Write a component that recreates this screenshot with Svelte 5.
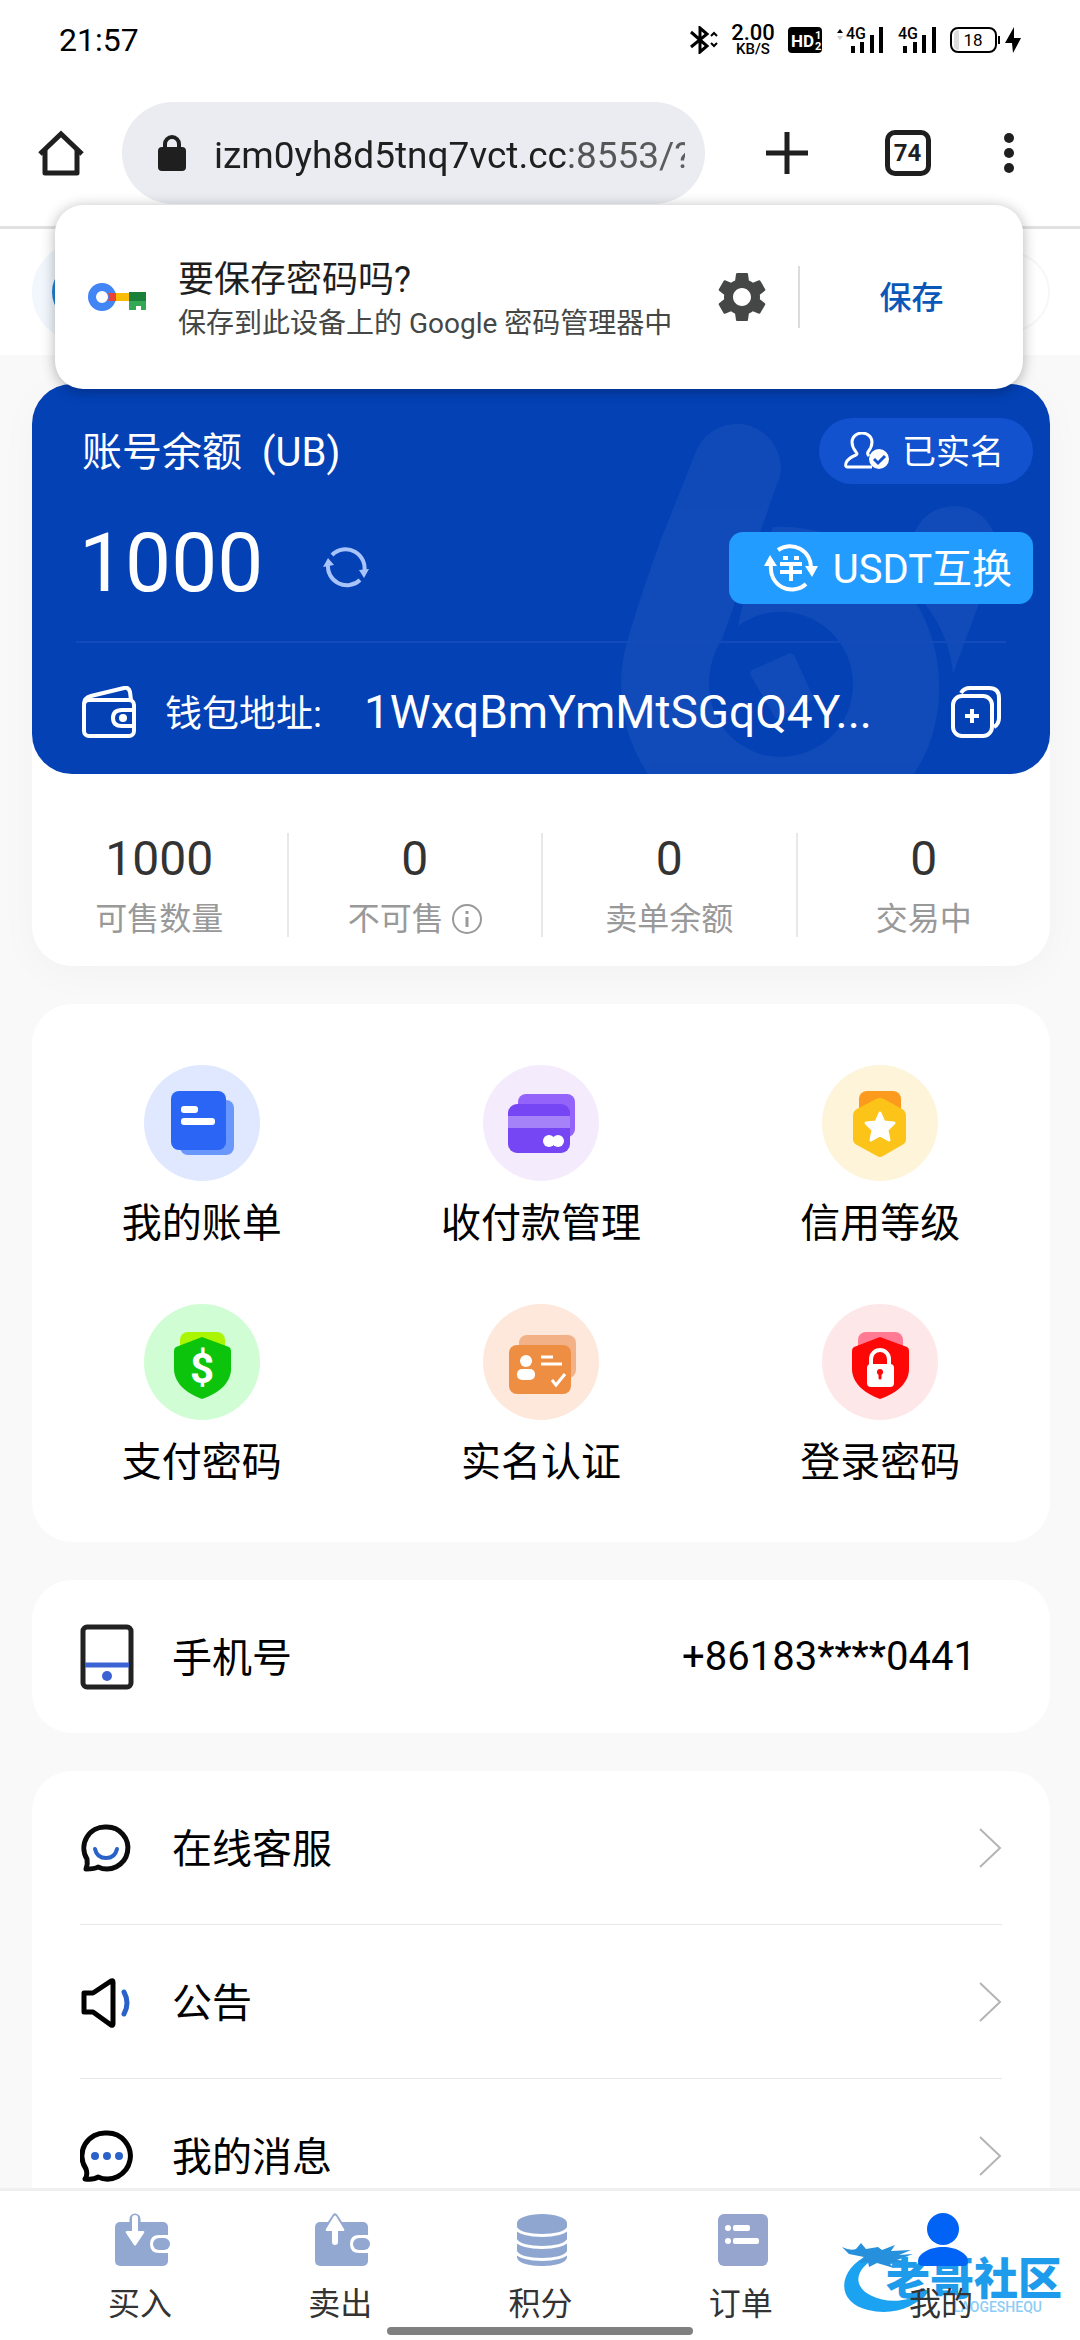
<script lang="ts">
  let url = $state("izm0yh8d5tnq7vct.cc:8553/?");
  let activeTab = $state("mine");

  const stats = [
    { value: "1000", label: "可售数量", info: false },
    { value: "0", label: "不可售", info: true },
    { value: "0", label: "卖单余额", info: false },
    { value: "0", label: "交易中", info: false },
  ];

  const shortcuts = [
    { id: "bill", label: "我的账单" },
    { id: "payment", label: "收付款管理" },
    { id: "credit", label: "信用等级" },
    { id: "paypass", label: "支付密码" },
    { id: "verify", label: "实名认证" },
    { id: "loginpass", label: "登录密码" },
  ];

  const links = [
    { id: "service", label: "在线客服" },
    { id: "notice", label: "公告" },
    { id: "message", label: "我的消息" },
  ];

  const tabs = [
    { id: "buy", label: "买入" },
    { id: "sell", label: "卖出" },
    { id: "points", label: "积分" },
    { id: "orders", label: "订单" },
    { id: "mine", label: "我的" },
  ];
</script>

{#snippet shortcutIcon(id: string)}
  <svg width="116" height="116" viewBox="0 0 116 116" aria-hidden="true">
    {#if id === "bill"}
      <circle cx="58" cy="58" r="58" fill="#dfe8fe" />
      <rect x="36" y="35" width="54" height="55" rx="8" fill="#6a97fb" />
      <rect x="27" y="26" width="55" height="59" rx="8" fill="#2a65f6" />
      <rect x="37" y="41" width="17" height="7" rx="3" fill="#fff" />
      <rect x="37" y="53" width="34" height="7" rx="3" fill="#fff" />
    {:else if id === "payment"}
      <circle cx="58" cy="58" r="58" fill="#f4ecfc" />
      <rect x="35" y="29" width="57" height="43" rx="8" fill="#9463f9" />
      <rect x="25" y="39" width="62" height="49" rx="9" fill="#7646f5" />
      <path d="M25 51h62v12H25z" fill="#a582f8" />
      <circle cx="66" cy="76" r="6" fill="#fff" />
      <circle cx="75" cy="76" r="6" fill="#fff" />
    {:else if id === "credit"}
      <circle cx="58" cy="58" r="58" fill="#fdf4d9" />
      <rect x="37" y="26" width="42" height="34" rx="8" fill="#fc9a1d" />
      <path d="M54 34q4-2 8 0l18 10q4 2 4 7v23q0 4-4 6L61 91q-3 2-6 0L35 80q-4-2-4-6V51q0-5 4-7z" fill="#fcc318" />
      <path d="M58 48l4 9 10 1-7 7 2 10-9-5-9 5 2-10-7-7 10-1z" fill="#fff" stroke="#fff" stroke-width="3" stroke-linejoin="round" />
    {:else if id === "paypass"}
      <circle cx="58" cy="58" r="58" fill="#d0fdd3" />
      <rect x="36" y="28" width="45" height="30" rx="8" fill="#a9f504" />
      <path d="M58 33l27 10q2 1 2 4v18c0 13-11 24-29 30C41 89 30 78 30 65V47q0-3 2-4z" fill="#0cc40c" />
      <text x="58" y="79" text-anchor="middle" font-family="Roboto, sans-serif" font-size="42" font-weight="700" fill="#fff">$</text>
    {:else if id === "verify"}
      <circle cx="58" cy="58" r="58" fill="#fde8db" />
      <rect x="36" y="31" width="57" height="43" rx="8" fill="#f3b188" />
      <rect x="26" y="41" width="62" height="49" rx="8" fill="#ed8e43" />
      <circle cx="43" cy="57" r="6" fill="#fff" />
      <rect x="34" y="65" width="18" height="11" rx="5" fill="#fff" />
      <path d="M58 53h12M58 60h21" stroke="#fff" stroke-width="3" />
      <path d="M69 76l4 5 9-11" fill="none" stroke="#fff" stroke-width="3" />
    {:else}
      <circle cx="58" cy="58" r="58" fill="#fde7e9" />
      <rect x="36" y="28" width="45" height="30" rx="8" fill="#ff7a92" />
      <path d="M58 33l27 10q2 1 2 4v18c0 13-11 24-29 30C41 89 30 78 30 65V47q0-3 2-4z" fill="#fd0707" />
      <path d="M49 62v-7a9 9 0 0 1 18 0v7" fill="none" stroke="#fff" stroke-width="4" />
      <rect x="45" y="60" width="27" height="23" rx="4" fill="#fff" />
      <path d="M58 74v-5" stroke="#fd0707" stroke-width="3" stroke-linecap="round" />
      <circle cx="58" cy="68" r="3" fill="#fd0707" />
    {/if}
  </svg>
{/snippet}

{#snippet rowIcon(id: string)}
  <svg width="54" height="66" viewBox="0 0 54 66" fill="none" aria-hidden="true">
    {#if id === "phone"}
      <rect x="3" y="3" width="48" height="60" rx="4" stroke="#222" stroke-width="5" />
      <path d="M5 41h44" stroke="#3c63d3" stroke-width="5" />
      <circle cx="27" cy="52" r="5" fill="#3c63d3" />
    {:else if id === "service"}
      <path d="M26 12a21 21 0 1 1-8 40q-3 2-12 2 2-5 1-10A21 21 0 0 1 26 12z" stroke="#0b0b0b" stroke-width="5" stroke-linejoin="round" />
      <path d="M15 34q2 9 11 9t11-9" stroke="#2b62c9" stroke-width="4" stroke-linecap="round" />
    {:else if id === "notice"}
      <path d="M4 24h9l18-12q2-1 2 1v42q0 2-2 1L13 43H4z" stroke="#000" stroke-width="5" stroke-linejoin="round" />
      <path d="M44 23q6 11 0 22" stroke="#2b62c9" stroke-width="5" stroke-linecap="round" />
    {:else}
      <path d="M27 10a23 23 0 1 1-9 44q-4 3-13 2 3-4 1-10A23 23 0 0 1 27 10z" stroke="#000" stroke-width="5" stroke-linejoin="round" />
      <circle cx="15" cy="33" r="4" fill="#2b62c9" />
      <circle cx="27" cy="33" r="4" fill="#2b62c9" />
      <circle cx="39" cy="33" r="4" fill="#2b62c9" />
    {/if}
  </svg>
{/snippet}

{#snippet tabIcon(id: string)}
  <svg width="60" height="54" viewBox="0 0 60 54" aria-hidden="true">
    {#if id === "buy" || id === "sell"}
      <rect x="5" y="9" width="53" height="44" rx="5" fill="#93a8d1" />
      {#if id === "buy"}
        <path d="M25 6v19" stroke="#93a8d1" stroke-width="11" stroke-linecap="round" />
        <path d="M25 5v16" stroke="#fff" stroke-width="6" stroke-linecap="round" />
        <path d="M17 18h16q2 0 1 2l-8 12q-1 1-2 0l-8-12q-1-2 1-2z" fill="#fff" />
      {:else}
        <path d="M25 3l8 12H17z" fill="#fff" stroke="#93a8d1" stroke-width="5" stroke-linejoin="round" />
        <path d="M25 14v15" stroke="#fff" stroke-width="6" stroke-linecap="round" />
        <path d="M24 3q1-1 2 0l8 13q1 2-1 2H17q-2 0-1-2z" fill="#fff" />
      {/if}
      <path d="M60 22H49q-9 0-9 9t9 9h11z" fill="#fff" />
      <rect x="43" y="25" width="17" height="12" rx="6" fill="#93a8d1" />
    {:else if id === "points"}
      <path d="M7 10v34c0 12 50 12 50 0V10z" fill="#8fa7d0" />
      <ellipse cx="32" cy="10" rx="25" ry="9" fill="#8fa7d0" />
      <path d="M6 15c4 10 48 10 52 0M6 27c4 10 48 10 52 0M6 39c4 10 48 10 52 0" fill="none" stroke="#fff" stroke-width="3" />
    {:else if id === "orders"}
      <rect x="7" y="1" width="50" height="52" rx="6" fill="#95a5cd" />
      <circle cx="17" cy="15" r="3" fill="#fff" />
      <circle cx="17" cy="28" r="3" fill="#fff" />
      <rect x="22" y="12" width="17" height="6" rx="2" fill="#fff" />
      <rect x="22" y="25" width="26" height="6" rx="2" fill="#fff" />
    {:else}
      <circle cx="32" cy="16" r="16" fill="#0063f5" />
      <path d="M32 34c14 0 25 7 25 14q0 5-5 5H12q-5 0-5-5c0-7 11-14 25-14z" fill="#0063f5" />
    {/if}
  </svg>
{/snippet}

<div class="screen">
  <div class="status-bar">
    <span class="clock">21:57</span>
    <div class="status-icons">
      <svg width="28" height="28" viewBox="0 0 28 28" fill="none" stroke="#000" stroke-width="3" aria-hidden="true">
        <path d="M1 6l16 14-7 6V2l7 6L1 21" />
        <path d="M21 10l3-3 3 3M21 17l3 3 3-3" stroke-width="2" />
      </svg>
      <span class="net-speed"><b>2.00</b><small>KB/S</small></span>
      <svg width="34" height="26" viewBox="0 0 34 26" aria-hidden="true">
        <rect width="34" height="26" rx="4" />
        <text x="3" y="20" class="svg-text" font-size="17" font-weight="700" fill="#fff">HD</text>
        <text x="27" y="12" class="svg-text" font-size="11" font-weight="700" fill="#fff">1</text>
        <text x="27" y="23" class="svg-text" font-size="11" font-weight="700" fill="#fff">2</text>
      </svg>
      <svg width="48" height="34" viewBox="0 -4 48 34" aria-hidden="true">
        <path d="M1 6l3-4 3 4z" />
        <path d="M1 9l3 4 3-4z" fill="#ccc" />
        <text x="10" y="12" class="svg-text" font-size="16" font-weight="500">4G</text>
        <path d="M15 19h4v7h-4zM24 15h4v11h-4zM34 8h4v18h-4zM43 0h4v26h-4z" />
      </svg>
      <svg width="38" height="34" viewBox="0 -4 38 34" aria-hidden="true">
        <text x="0" y="12" class="svg-text" font-size="16" font-weight="500">4G</text>
        <path d="M5 19h4v7H5zM15 15h4v11h-4zM24 8h4v18h-4zM34 0h4v26h-4z" />
      </svg>
      <svg width="71" height="26" viewBox="0 0 71 26" aria-hidden="true">
        <rect x="1" y="1" width="45" height="24" rx="7" fill="#fff" stroke="#000" stroke-width="2" />
        <path d="M4 6q1-3 5-3v20q-4 0-5-3z" fill="#ddd" />
        <path d="M48 9h2v8h-2z" />
        <path d="M64 0L55 16h7l1 10 8-15h-7z" />
        <text x="23" y="19" text-anchor="middle" class="svg-text" font-size="17">18</text>
      </svg>
    </div>
  </div>

  <div class="toolbar">
    <button class="icon-btn" aria-label="主页">
      <svg width="46" height="46" viewBox="0 0 46 46" fill="none" stroke="#1f1f1f" stroke-width="5">
        <path d="M2 24L23 4l21 20" />
        <path d="M7 20v23h32V20" stroke-linejoin="round" />
      </svg>
    </button>
    <div class="address">
      <svg width="28" height="36" viewBox="0 0 28 36" aria-hidden="true">
        <path d="M7 14V9a7 7 0 0 1 14 0v5" fill="none" stroke="#1f1f1f" stroke-width="4" />
        <rect y="12" width="28" height="24" rx="4" fill="#1f1f1f" />
      </svg>
      <input type="text" aria-label="网址" bind:value={url} />
    </div>
    <button class="icon-btn wide" aria-label="新标签页">
      <svg width="42" height="42" viewBox="0 0 42 42" stroke="#1f1f1f" stroke-width="5">
        <path d="M21 0v42M0 21h42" />
      </svg>
    </button>
    <button class="icon-btn wide" aria-label="标签页"><span class="tab-count">74</span></button>
    <button class="icon-btn more" aria-label="更多">
      <svg width="12" height="42" viewBox="0 0 12 42" fill="#1f1f1f">
        <circle cx="6" cy="6" r="5" />
        <circle cx="6" cy="21" r="5" />
        <circle cx="6" cy="36" r="5" />
      </svg>
    </button>
  </div>

  <div class="save-prompt" role="dialog" aria-label="保存密码">
    <svg width="58" height="32" viewBox="0 0 58 32" aria-hidden="true">
      <path d="M22 12h20v8H22z" fill="#fbbc05" />
      <path d="M41 11h17v10H41z" fill="#188038" />
      <path d="M41 20h17v9h-5v-4h-5v4h-7z" fill="#34a853" />
      <circle cx="14" cy="16" r="10" fill="none" stroke="#4285f4" stroke-width="8" />
      <path d="M20 12h8v8h-8q2-4 0-8z" fill="#ea4335" />
    </svg>
    <div class="prompt-text">
      <strong>要保存密码吗?</strong>
      <span>保存到此设备上的 Google 密码管理器中</span>
    </div>
    <button class="gear" aria-label="设置">
      <svg width="60" height="60" viewBox="0 0 24 24" fill="#444746">
        <path d="M19.14 12.94c.04-.3.06-.61.06-.94 0-.32-.02-.64-.07-.94l2.03-1.58c.18-.14.23-.41.12-.61l-1.92-3.32c-.12-.22-.37-.29-.59-.22l-2.39.96c-.5-.38-1.03-.7-1.62-.94l-.36-2.54c-.04-.24-.24-.41-.48-.41h-3.84c-.24 0-.43.17-.47.41l-.36 2.54c-.59.24-1.13.57-1.62.94l-2.39-.96c-.22-.08-.47 0-.59.22L2.74 8.87c-.12.21-.08.47.12.61l2.03 1.58c-.05.3-.09.63-.09.94s.02.64.07.94l-2.03 1.58c-.18.14-.23.41-.12.61l1.92 3.32c.12.22.37.29.59.22l2.39-.96c.5.38 1.03.7 1.62.94l.36 2.54c.05.24.24.41.48.41h3.84c.24 0 .44-.17.47-.41l.36-2.54c.59-.24 1.13-.56 1.62-.94l2.39.96c.22.08.47 0 .59-.22l1.92-3.32c.12-.22.07-.47-.12-.61l-2.01-1.58zM12 15.6c-1.98 0-3.6-1.62-3.6-3.6s1.62-3.6 3.6-3.6 3.6 1.62 3.6 3.6-1.62 3.6-3.6 3.6z" />
      </svg>
    </button>
    <button class="save">保存</button>
  </div>

  <main>
    <header class="profile">
      <span class="avatar"></span>
      <span class="profile-pill"></span>
    </header>

    <section class="balance">
      <div class="balance-card">
        <svg class="emblem" width="400" height="360" viewBox="0 0 400 360" aria-hidden="true">
          <g fill="#fff" opacity="0.05">
            <path d="M87 35A44 44 0 0 1 170 62L112 225q-13 20-13 46a72 72 0 1 0 144 0 72 72 0 0 0-115-59l5-22 30-77a158 158 0 0 1 166 159 158 158 0 0 1-25 88H38a160 160 0 0 1-20-135q10-35 32-97z" />
            <path d="M305 117a43 43 0 0 1 82 16l-19 59-25 68q-3-38-28-70-18-40-10-73z" />
            <path d="M142 256l36-16q5-2 7 3l19 42-38 20-25-43q-2-4 1-6z" />
          </g>
        </svg>
        <div class="card-row">
          <h2>账号余额&nbsp; (UB)</h2>
          <div class="verified">
            <svg width="46" height="38" viewBox="0 0 46 38" fill="none" stroke="#fff" stroke-width="3" aria-hidden="true">
              <path d="M28 35H3q-2 0-1-4 2-5 10-8 2-1 0-3-4-5-4-10a10 9 0 0 1 20 0q0 5-4 10-1 2 1 4" stroke-linejoin="round" />
              <circle cx="35" cy="27" r="10" fill="#fff" stroke="none" />
              <path d="M30 27l4 4 7-7" stroke="#1252cf" />
            </svg>
            <span>已实名</span>
          </div>
        </div>
        <div class="card-row amount-row">
          <span class="amount">1000</span>
          <button class="icon-btn" aria-label="刷新">
            <svg width="46" height="42" viewBox="0 0 46 42" fill="none" stroke="#a9c4fb" stroke-width="4">
              <path d="M9 8A19 19 0 0 1 41 26M37 33A19 19 0 0 1 5 17" />
              <path d="M0 20l5-9 6 7zM46 22l-5 9-5-8z" fill="#a9c4fb" stroke="none" />
            </svg>
          </button>
          <button class="exchange">
            <svg width="54" height="48" viewBox="0 0 54 48" fill="none" stroke="#fff" stroke-width="4" aria-hidden="true">
              <path d="M14 6a21 21 0 0 1 33 18M42 40A21 21 0 0 1 7 22" />
              <path d="M0 22l6-11 7 11zM54 22l-6 11-7-11z" fill="#fff" stroke="none" />
              <path d="M19 14h5M30 14h5M16 20h22M16 28h22M27 19v18" />
            </svg>
            <span>USDT互换</span>
          </button>
        </div>
        <div class="wallet-row">
          <svg width="54" height="52" viewBox="0 0 54 52" fill="none" stroke="#fff" stroke-width="4" aria-hidden="true">
            <rect x="2" y="14" width="50" height="36" rx="5" />
            <path d="M2 18q0-6 7-8l33-8q5-1 6 4l1 8" />
            <path d="M52 24H40q-9 0-9 8t9 8h12" />
            <circle cx="41" cy="32" r="4" fill="#fff" stroke="none" />
          </svg>
          <span class="wallet-label">钱包地址:</span>
          <span class="wallet-address">1WxqBmYmMtSGqQ4Y...</span>
          <button class="icon-btn" aria-label="复制">
            <svg width="50" height="52" viewBox="0 0 50 52" fill="none" stroke="#fff" stroke-width="4">
              <rect x="2" y="10" width="39" height="40" rx="9" />
              <path d="M10 7q3-5 9-5h19q10 0 10 10v20q0 6-5 9" />
              <path d="M21 23v14M14 30h14" />
            </svg>
          </button>
        </div>
      </div>
      <div class="stats">
        {#each stats as stat}
          <div class="stat">
            <span class="stat-value">{stat.value}</span>
            <span class="stat-label">
              {stat.label}
              {#if stat.info}
                <svg width="30" height="30" viewBox="0 0 30 30" fill="none" stroke="#999" stroke-width="2" aria-hidden="true">
                  <circle cx="15" cy="15" r="14" />
                  <path d="M15 13v10M15 7v3" stroke-width="3" />
                </svg>
              {/if}
            </span>
          </div>
        {/each}
      </div>
    </section>

    <section class="panel shortcuts">
      {#each shortcuts as item}
        <button class="shortcut">
          {@render shortcutIcon(item.id)}
          <span>{item.label}</span>
        </button>
      {/each}
    </section>

    <section class="panel">
      <div class="row">
        {@render rowIcon("phone")}
        <span class="row-label">手机号</span>
        <span class="row-value">+86183****0441</span>
      </div>
    </section>

    <section class="panel">
      {#each links as link}
        <a class="row" href="#{link.id}">
          {@render rowIcon(link.id)}
          <span class="row-label">{link.label}</span>
          <svg width="24" height="40" viewBox="0 0 24 40" fill="none" stroke="#b4b4b4" stroke-width="2" aria-hidden="true">
            <path d="M2 1l20 19L2 39" />
          </svg>
        </a>
      {/each}
    </section>
  </main>

  <nav class="tab-bar">
    {#each tabs as tab}
      <button class="tab" aria-current={activeTab === tab.id ? "page" : undefined} onclick={() => (activeTab = tab.id)}>
        {@render tabIcon(tab.id)}
        <span>{tab.label}</span>
      </button>
    {/each}
    <span class="home-indicator"></span>
    <div class="watermark">
      <svg width="90" height="72" viewBox="0 0 90 72" aria-hidden="true">
        <path d="M28 12C-4 26-8 60 26 68c24 6 48-2 62-20-20 12-42 14-58 6C8 44 14 24 38 14z" fill="#1ba3f2" />
        <path d="M0 5q8 4 14 2l5-6 5 6 12-2 4 3 13-5-4 6 20-1-12 5 14-1-16 6 11 1-18 3 4 4-17-5-8 4-1-5-9 1 5-6-15-3z" fill="#2690dc" />
      </svg>
      <span class="watermark-name">老哥社区</span>
      <span class="watermark-sub">LAOGESHEQU</span>
    </div>
  </nav>
</div>

<style>
  :global(body) {
    background: #f9f9f9;
  }

  .screen {
    position: relative;
    display: flex;
    flex-direction: column;
    height: 100vh;
    overflow: hidden;
    font-family: Roboto, 'Noto Sans CJK SC', sans-serif;
    color: #000;
  }

  button {
    border: 0;
    padding: 0;
    background: none;
    font: inherit;
    color: inherit;
    cursor: pointer;
  }

  svg {
    display: block;
    flex: none;
  }

  .status-bar {
    display: flex;
    align-items: center;
    justify-content: space-between;
    flex: none;
    height: 80px;
    padding: 0 59px;
    background: #fff;
  }

  .clock {
    font-size: 32px;
  }

  .status-icons {
    display: flex;
    align-items: center;
    gap: 14px;
  }

  .net-speed {
    display: flex;
    flex-direction: column;
    align-items: center;
    width: 42px;
    font-weight: 500;
  }

  .net-speed b {
    font-size: 22px;
    font-weight: 500;
    line-height: 18px;
  }

  .net-speed small {
    font-size: 15px;
    line-height: 14px;
  }

  .svg-text {
    font-family: Roboto, sans-serif;
  }

  .toolbar {
    display: flex;
    align-items: center;
    flex: none;
    height: 146px;
    padding: 0 30px 0 38px;
    border-bottom: 3px solid #e1e1e2;
    background: #fff;
  }

  .icon-btn {
    display: flex;
    align-items: center;
    justify-content: center;
  }

  .icon-btn.wide {
    width: 121px;
  }

  .icon-btn.more {
    width: 82px;
  }

  .address {
    display: flex;
    align-items: center;
    flex: 1;
    gap: 28px;
    height: 102px;
    min-width: 0;
    margin: 0 21px 0 38px;
    padding: 0 20px 0 36px;
    border-radius: 51px;
    background: #ebecf1;
    box-sizing: border-box;
  }

  .address input {
    flex: 1;
    min-width: 0;
    padding: 4px 0 0;
    border: 0;
    outline: 0;
    background: none;
    font: inherit;
    font-size: 37px;
    color: #1f1f1f;
    mask-image: linear-gradient(to right, #000 74%, rgba(0, 0, 0, 0.75) 76%, rgba(0, 0, 0, 0.7));
  }

  .tab-count {
    display: flex;
    align-items: center;
    justify-content: center;
    width: 46px;
    height: 46px;
    border: 5px solid #1f1f1f;
    border-radius: 10px;
    box-sizing: border-box;
    font-size: 24px;
    font-weight: 700;
    color: #1f1f1f;
  }

  .save-prompt {
    position: absolute;
    z-index: 2;
    top: 205px;
    left: 55px;
    right: 57px;
    display: flex;
    align-items: center;
    height: 184px;
    padding-left: 33px;
    border-radius: 28px;
    background: #fff;
    box-shadow: 0 2px 14px rgba(0, 0, 0, 0.3);
    box-sizing: border-box;
  }

  .prompt-text {
    display: flex;
    flex-direction: column;
    flex: 1;
    min-width: 0;
    margin-left: 32px;
    padding-top: 8px;
    white-space: nowrap;
  }

  .prompt-text strong {
    font-size: 36px;
    font-weight: 400;
    line-height: 46px;
    color: #1f1f1f;
  }

  .prompt-text span {
    font-size: 28px;
    line-height: 42px;
    color: #444746;
  }

  .gear {
    margin-right: 26px;
  }

  .save {
    width: 225px;
    height: 62px;
    padding-bottom: 4px;
    border-left: 2px solid #dcdcdc;
    font-size: 32px;
    font-weight: 500;
    color: #0b57b8;
  }

  main {
    flex: 1;
    min-height: 0;
    overflow: hidden;
    padding: 0 30px 0 32px;
    background: #f9f9f9;
  }

  .profile {
    display: flex;
    align-items: center;
    justify-content: space-between;
    height: 126px;
    margin: 0 -30px 29px -32px;
    padding: 0 30px 0 32px;
    background: #fff;
  }

  .avatar {
    width: 60px;
    height: 60px;
    border: 20px solid #f1f7fd;
    border-radius: 50%;
    background: #1f83d6;
  }

  .profile-pill {
    width: 200px;
    height: 76px;
    border: 2px solid #f7f7f9;
    border-radius: 40px;
  }

  .balance {
    border-radius: 40px;
    background: #fff;
    box-shadow: 0 8px 40px rgba(0, 0, 0, 0.03);
  }

  .balance-card {
    position: relative;
    padding: 34px 17px 0 50px;
    border-radius: 40px;
    background: #0341b5;
    color: #fff;
    overflow: hidden;
  }

  .emblem {
    position: absolute;
    right: 40px;
    bottom: 0;
  }

  .card-row {
    position: relative;
    display: flex;
    align-items: center;
    justify-content: space-between;
  }

  h2 {
    margin: 0;
    padding-bottom: 4px;
    font-size: 40px;
    font-weight: 400;
  }

  .verified {
    display: flex;
    align-items: center;
    gap: 12px;
    height: 66px;
    padding: 0 29px 0 25px;
    border-radius: 33px;
    background: #1252cf;
    font-size: 34px;
  }

  .verified span,
  .exchange span {
    padding-bottom: 4px;
  }

  .amount-row {
    height: 72px;
    margin-top: 48px;
  }

  .amount {
    margin: 0 60px 10px -3px;
    font-size: 82px;
    line-height: 72px;
  }

  .exchange {
    display: flex;
    align-items: center;
    gap: 15px;
    height: 72px;
    margin-left: auto;
    padding: 0 21px 0 35px;
    border-radius: 14px;
    background: #229cff;
    font-size: 40px;
  }

  .wallet-row {
    position: relative;
    display: flex;
    align-items: center;
    height: 133px;
    margin-top: 37px;
    margin-left: -6px;
    margin-right: 27px;
    padding: 6px 5px 0 6px;
    border-top: 2px solid #134bbb;
    box-sizing: border-box;
  }

  .wallet-label {
    margin: 0 42px 0 29px;
    padding-bottom: 2px;
    font-size: 37px;
    white-space: nowrap;
  }

  .wallet-address {
    flex: 1;
    min-width: 0;
    font-size: 46px;
    white-space: nowrap;
  }

  .stats {
    display: grid;
    grid-template-columns: repeat(4, 1fr);
    padding: 59px 0 29px;
  }

  .stat {
    display: flex;
    flex-direction: column;
    align-items: center;
    gap: 16px;
  }

  .stat + .stat {
    border-left: 2px solid #e8e8e8;
  }

  .stat-value {
    font-size: 48px;
    line-height: 52px;
    color: #333;
  }

  .stat-label {
    display: flex;
    align-items: center;
    gap: 8px;
    font-size: 32px;
    line-height: 36px;
    color: #999;
  }

  .panel {
    margin-top: 38px;
    border-radius: 40px;
    background: #fff;
  }

  .shortcuts {
    display: grid;
    grid-template-columns: repeat(3, 1fr);
    row-gap: 52px;
    padding: 61px 0 51px;
  }

  .shortcut {
    display: flex;
    flex-direction: column;
    align-items: center;
    gap: 15px;
    font-size: 40px;
    line-height: 56px;
  }

  .row {
    display: flex;
    align-items: center;
    height: 153px;
    margin: 0 48px;
    color: inherit;
    text-decoration: none;
  }

  a.row + a.row {
    border-top: 1px solid #e8e8e8;
  }

  .row-label {
    flex: 1;
    margin-left: 38px;
    padding-bottom: 4px;
    font-size: 40px;
  }

  .row-value {
    margin-right: 26px;
    font-size: 40px;
  }

  .tab-bar {
    position: relative;
    display: grid;
    grid-template-columns: repeat(5, 1fr);
    flex: none;
    height: 152px;
    padding: 22px 39px 0 40px;
    border-top: 3px solid #efefef;
    background: #fff;
    box-sizing: border-box;
  }

  .tab {
    display: flex;
    flex-direction: column;
    align-items: center;
    gap: 17px;
    z-index: 1;
    font-size: 32px;
    line-height: 40px;
    color: #333;
  }

  .home-indicator {
    position: absolute;
    bottom: 5px;
    left: 50%;
    width: 306px;
    height: 8px;
    margin-left: -153px;
    border-radius: 4px;
    background: #808080;
  }

  .watermark {
    position: absolute;
    right: 18px;
    bottom: 26px;
    width: 220px;
    height: 72px;
    pointer-events: none;
  }

  .watermark-name {
    position: absolute;
    top: 16px;
    right: 0;
    font-size: 44px;
    font-weight: 900;
    line-height: 44px;
    color: #1e9bea;
  }

  .watermark-sub {
    position: absolute;
    right: 20px;
    bottom: 1px;
    font-size: 14px;
    font-weight: 500;
    line-height: 12px;
    color: #8ccdf7;
  }
</style>
